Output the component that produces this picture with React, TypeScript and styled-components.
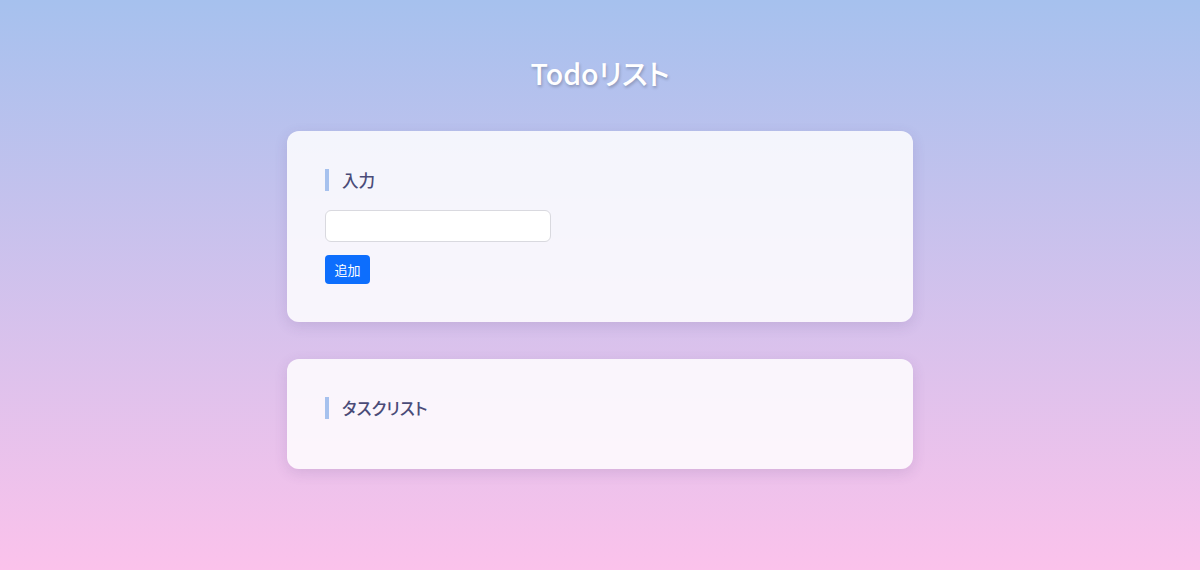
import React from 'react';
import styled, { createGlobalStyle } from 'styled-components';

const GlobalStyle = createGlobalStyle`
  html, body {
    margin: 0;
    padding: 0;
  }
  body {
    font-family: "Noto Sans CJK JP", "Noto Sans", sans-serif;
    font-feature-settings: "palt";
    background: linear-gradient(to bottom, #a6c1ee 0%, #fbc2eb 100%);
    min-height: 570px;
  }
`;

const App: React.FC = () => {
  return (
    <>
      <GlobalStyle />
      <Page>
        <Title>Todoリスト</Title>
        <Card>
          <SectionTitle>入力</SectionTitle>
          <Form>
            <TextInput type="text" />
            <AddButton type="button">追加</AddButton>
          </Form>
        </Card>
        <Card>
          <SectionTitle>タスクリスト</SectionTitle>
          <TaskList />
        </Card>
      </Page>
    </>
  );
};

const Page = styled.div`
  min-height: 570px;
  box-sizing: border-box;
  padding: 54px 0 40px;
  display: flex;
  flex-direction: column;
  align-items: center;
  gap: 37px;
`;

const Title = styled.h1`
  margin: 0 0 2px;
  font-size: 28.5px;
  font-weight: 500;
  line-height: 38px;
  color: #ffffff;
  text-shadow: 1px 2px 3px rgba(0, 0, 0, 0.22);
`;

const Card = styled.section`
  width: 626px;
  box-sizing: border-box;
  padding: 38px 38px;
  background-color: rgba(255, 255, 255, 0.84);
  border-radius: 12px;
  box-shadow: 0 4px 14px rgba(80, 60, 120, 0.14);
`;

const SectionTitle = styled.h2`
  margin: 0 0 12px;
  padding-left: 13px;
  border-left: 4px solid #a6c1ee;
  font-size: 16.6px;
  font-weight: 500;
  line-height: 22px;
  color: #4a4b78;
`;

const Form = styled.div`
  display: flex;
  flex-direction: column;
  align-items: flex-start;
  gap: 13px;
  padding-top: 7px;
`;

const TextInput = styled.input`
  width: 226px;
  height: 32px;
  box-sizing: border-box;
  border: 1px solid #d9d9df;
  border-radius: 6px;
  background: #ffffff;
  padding: 4px 8px;
  font-size: 14px;
  outline: none;
`;

const AddButton = styled.button`
  height: 29px;
  padding: 0 9.5px;
  border: none;
  border-radius: 4px;
  background-color: #0d6efd;
  color: #ffffff;
  font-family: "Noto Sans CJK JP", "Noto Sans", sans-serif;
  font-feature-settings: "palt";
  font-size: 13px;
  cursor: pointer;
`;

const TaskList = styled.ul`
  margin: 0;
  padding: 0;
  list-style: none;
`;

export default App;
